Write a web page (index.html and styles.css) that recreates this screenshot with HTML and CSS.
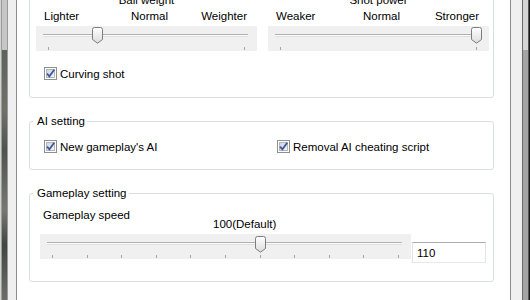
FILE: index.html
```html
<!DOCTYPE html>
<html lang="en">
<head>
  <meta charset="UTF-8" />
  <title>Game Settings</title>
  <link rel="stylesheet" href="styles.css">
</head>
<body>
<div class="window">

  <div class="frame-left">
    <div class="rim"></div>
    <div class="glass"></div>
    <div class="ledge"></div>
  </div>

  <div class="page">
    <div class="scroll-content">

      <!-- ball / shot sliders (top of group is scrolled away) -->
      <fieldset class="group group-ball">
        <div class="slider-pair">
          <div class="slider-block">
            <div class="slider-title">Ball weight</div>
            <div class="slider-labels">
              <span>Lighter</span>
              <span class="mid">Normal</span>
              <span class="end">Weighter</span>
            </div>
            <div class="slider">
              <div class="track"></div>
              <div class="ticks"><i></i><i></i></div>
              <svg class="thumb" style="--v: 0.25" width="11" height="17" viewBox="0 0 11 17">
                <use href="#thumb-shape"/>
              </svg>
            </div>
          </div>
          <div class="slider-block">
            <div class="slider-title">Shot power</div>
            <div class="slider-labels">
              <span>Weaker</span>
              <span class="mid">Normal</span>
              <span class="end">Stronger</span>
            </div>
            <div class="slider">
              <div class="track"></div>
              <div class="ticks"><i></i><i></i></div>
              <svg class="thumb" style="--v: 1" width="11" height="17" viewBox="0 0 11 17">
                <use href="#thumb-shape"/>
              </svg>
            </div>
          </div>
        </div>
        <label class="check curving">
          <svg width="13" height="13" viewBox="0 0 13 13"><use href="#checkbox"/></svg>
          <span>Curving shot</span>
        </label>
      </fieldset>

      <fieldset class="group group-ai">
        <legend>AI setting</legend>
        <div class="check-row">
          <label class="check">
            <svg width="13" height="13" viewBox="0 0 13 13"><use href="#checkbox"/></svg>
            <span>New gameplay's AI</span>
          </label>
          <label class="check">
            <svg width="13" height="13" viewBox="0 0 13 13"><use href="#checkbox"/></svg>
            <span>Removal AI cheating script</span>
          </label>
        </div>
      </fieldset>

      <fieldset class="group group-speed">
        <legend>Gameplay setting</legend>
        <div class="speed-head">
          <span class="speed-label">Gameplay speed</span>
          <span class="speed-default">100(Default)</span>
        </div>
        <div class="speed-row">
          <div class="slider wide">
            <div class="track"></div>
            <div class="ticks"><i></i><i></i><i></i><i></i><i></i><i></i><i></i><i></i><i></i><i></i><i></i></div>
            <svg class="thumb" style="--v: 0.6" width="11" height="17" viewBox="0 0 11 17">
              <use href="#thumb-shape"/>
            </svg>
          </div>
          <input class="num" type="text" value="110">
        </div>
      </fieldset>

    </div>
  </div>

  <div class="frame-right">
    <div class="ledge"></div>
    <div class="bar"></div>
    <div class="rim"></div>
  </div>

</div>

<!-- shared shapes -->
<svg class="defs" width="0" height="0">
  <defs>
    <linearGradient id="thumb-fill" x1="0" y1="0" x2="0" y2="1">
      <stop offset="0" stop-color="#ffffff"/>
      <stop offset="1" stop-color="#dcdcdc"/>
    </linearGradient>
    <linearGradient id="box-fill" x1="0" y1="0" x2="1" y2="1">
      <stop offset="0" stop-color="#cfd3d9"/>
      <stop offset="1" stop-color="#f7f7f7"/>
    </linearGradient>
    <g id="thumb-shape">
      <path d="M0.5 2.5 Q0.5 0.5 2.5 0.5 H8.5 Q10.5 0.5 10.5 2.5 V12.5 L5.5 16.2 L0.5 12.5 Z"
            fill="url(#thumb-fill)" stroke="#7c7c7c"/>
    </g>
    <g id="checkbox">
      <rect x="0.5" y="0.5" width="12" height="12" fill="#fff" stroke="#8e8f8f"/>
      <rect x="2.5" y="2.5" width="8" height="8" fill="url(#box-fill)" stroke="#b3b7bd"/>
      <path d="M3 6.6 L5.4 9.4 L10.2 2.8" fill="none" stroke="#3d57a0" stroke-width="1.8"/>
    </g>
  </defs>
</svg>
</body>
</html>
```

FILE: styles.css
```css
    html, body {
      margin: 0;
      padding: 0;
      background: white;
      overflow: hidden;
      height: 100%;
      font-family: 'Liberation Sans', Arial, sans-serif;
      font-size: 11.5px;
      color: black;
    }

    .window {
      display: flex;
      width: 530px;
      height: 300px;
    }

    /* window chrome on both sides */
    .frame-left {
      display: flex;
      width: 17px;
      flex: none;
    }
    .frame-left .rim {
      width: 2px;
      background: linear-gradient(to right, #d2d2d2 50%, #9c9c9c 50%);
    }
    .frame-left .glass {
      width: 5px;
      background: linear-gradient(to bottom,
        #c6c6c6 0, #c6c6c6 50px,
        #5e615d 50px, #707269 110px, #4f534e 150px,
        #777971 210px, #3f4742 245px, #6d6e69 300px);
    }
    .frame-left .ledge {
      width: 8px;
      background: #efefef;
      border-left: 1px solid #9a9a9a;
      border-right: 1px solid #8d8d8d;
    }

    .frame-right {
      display: flex;
      width: 20px;
      flex: none;
    }
    .frame-right .ledge {
      width: 11px;
      background: #efefef;
      border-left: 1px solid #8a8a8a;
      border-right: 1px solid #6b6b6b;
    }
    .frame-right .bar {
      width: 5px;
      background: linear-gradient(to bottom, #d6d6d6 0, #d6d6d6 50px, #a4a4a4 50px);
    }
    .frame-right .rim {
      width: 2px;
      background: linear-gradient(to right, #555 50%, #1c1c1c 50%);
    }

    .page {
      width: 493px;
      flex: none;
      overflow: hidden;
      background: white;
    }
    .scroll-content {
      margin-top: -24px;
      padding: 0 16px 0 12px;
    }

    /* group boxes */
    .group {
      margin: 16px 0 0;
      padding: 0 4px 0 6px;
      border: 1px solid #d5dfe5;
      border-radius: 3px;
      min-width: 0;
    }
    .group legend {
      margin-left: -3px;
      padding: 0 2px 0 4px;
      line-height: 14px;
    }
    .group-ball {
      margin-top: 0;
      padding-top: 16px;
      padding-bottom: 16px;
    }
    .group-ai {
      padding-top: 12px;
      padding-bottom: 15px;
    }
    .group-speed {
      padding-top: 8px;
      padding-bottom: 18px;
    }

    /* sliders */
    .slider-pair {
      display: grid;
      grid-template-columns: 221px 221px;
      gap: 11px;
    }
    .slider-title {
      text-align: center;
      line-height: 14px;
    }
    .slider-labels {
      display: grid;
      grid-template-columns: 1fr auto 1fr;
      margin-top: 2px;
      padding: 0 10px 0 8px;
      line-height: 14px;
    }
    .slider-labels .mid {
      padding-left: 8px;
    }
    .slider-labels .end {
      text-align: right;
    }
    .slider-block .slider {
      margin-top: 3px;
    }

    .slider {
      position: relative;
      height: 25px;
      box-sizing: border-box;
      padding: 8px 12px 0;
      background: #f0f0f0;
    }
    .slider.wide {
      width: 371px;
      flex: none;
    }
    .track {
      margin: 0 -3px 0 -5px;
      height: 1px;
      background: #fcfcfc;
      border-top: 1px solid #b0b0b0;
      border-bottom: 1px solid #e0e0e0;
    }
    .ticks {
      display: flex;
      justify-content: space-between;
      margin-top: 10px;
    }
    .ticks i {
      width: 1px;
      height: 3px;
      background: #a5a5a5;
    }
    .thumb {
      position: absolute;
      top: 1px;
      left: calc(7px + (100% - 25px) * var(--v));
    }
    .wide .thumb {
      top: 2px;
    }

    /* checkboxes */
    .check {
      display: flex;
      align-items: flex-start;
      gap: 3px;
      line-height: 14px;
    }
    .check svg {
      flex: none;
    }
    .curving {
      margin: 16px 0 0 8px;
    }
    .check-row {
      display: grid;
      grid-template-columns: 233px auto;
      margin-left: 8px;
    }

    /* gameplay speed */
    .speed-head {
      display: flex;
      align-items: flex-start;
      height: 23px;
      margin-left: 7px;
      line-height: 14px;
    }
    .speed-label {
      width: 170px;
    }
    .speed-default {
      margin-top: 9px;
    }
    .speed-row {
      display: flex;
      align-items: flex-start;
      gap: 1px;
      margin: 3px 0 0 4px;
    }
    .num {
      margin: 8px 0 0;
      width: 74px;
      height: 21px;
      box-sizing: border-box;
      padding: 0 0 0 4px;
      border: 1px solid #e2e3ea;
      border-top-color: #abadb3;
      border-bottom-color: #e3e9ef;
      font: inherit;
      color: black;
      background: white;
      outline: none;
    }

    .defs {
      position: absolute;
    }
```
